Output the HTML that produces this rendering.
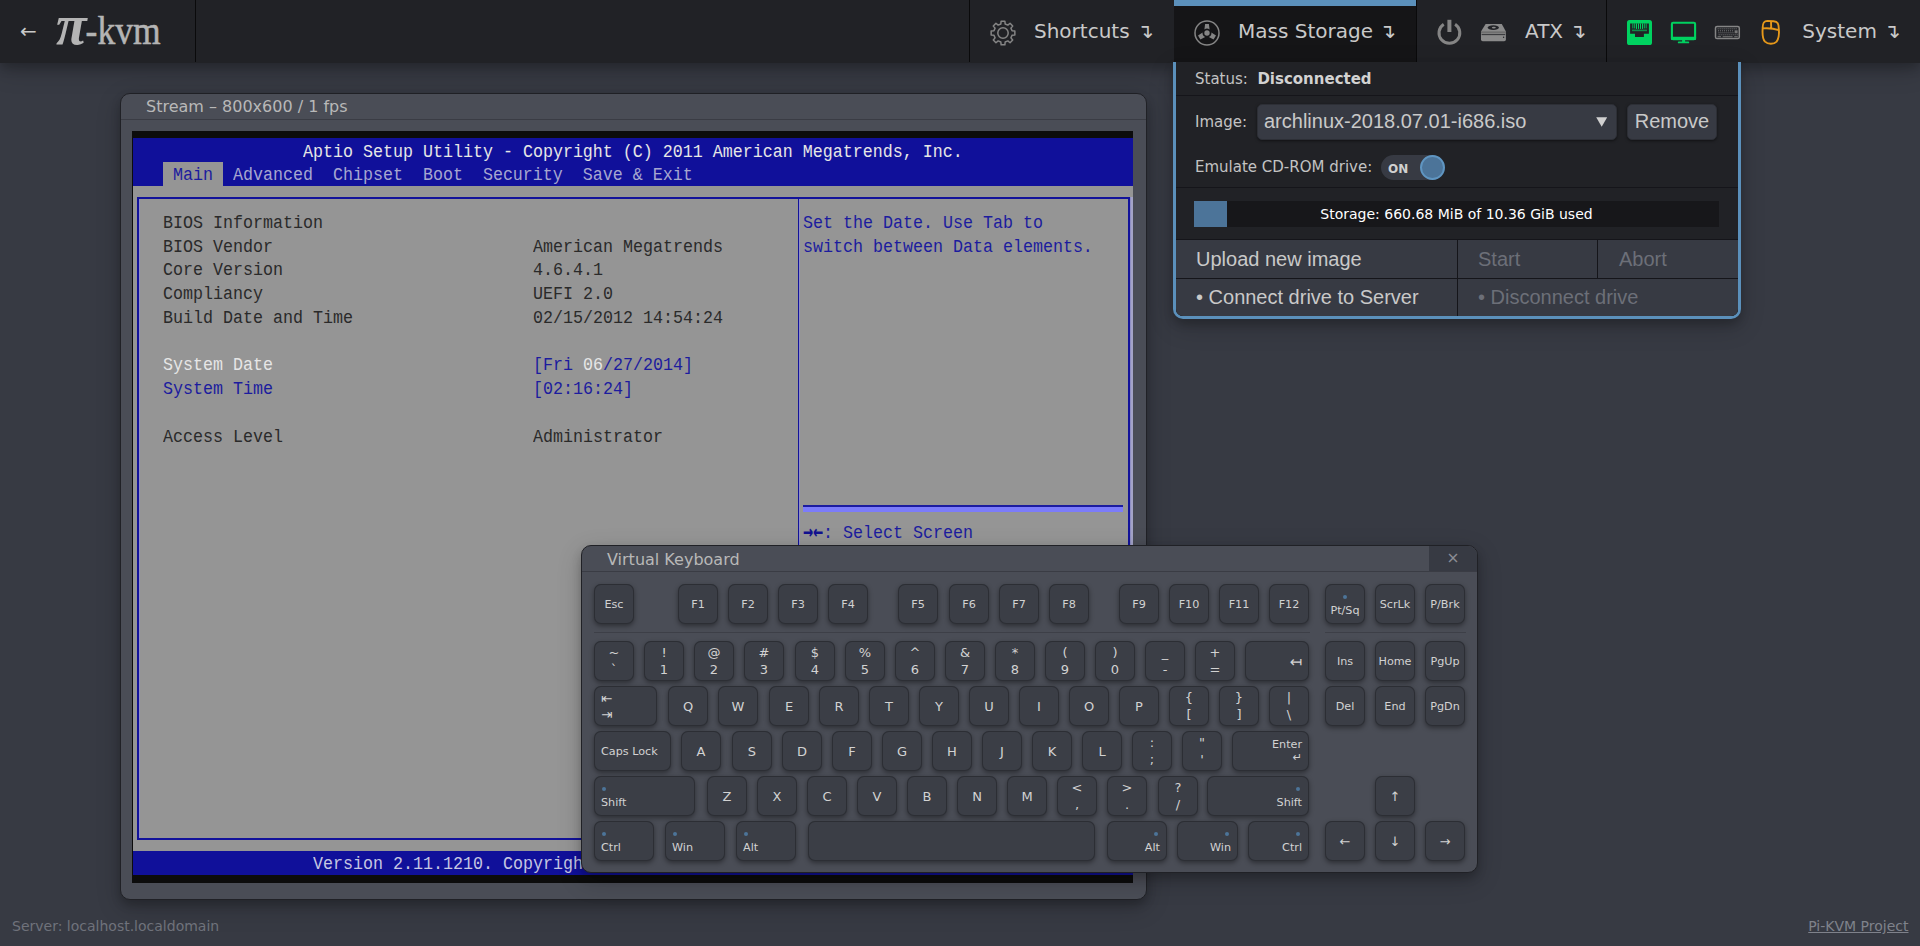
<!DOCTYPE html>
<html lang="en">
<head>
<meta charset="utf-8">
<title>Pi-KVM Session</title>
<style>
html,body{margin:0;padding:0;}
body{width:1920px;height:946px;overflow:hidden;background:#373a43;color:#c3c3c3;font-family:"DejaVu Sans","Liberation Sans",sans-serif;font-size:16px;position:relative;}
*{box-sizing:border-box;}
.abs{position:absolute;}
/* ---------- navbar ---------- */
#nav{position:absolute;left:0;top:0;width:1920px;height:63px;background:#212226;box-shadow:0 5px 10px 0 rgba(0,0,0,.2),0 7.5px 25px 0 rgba(0,0,0,.19);z-index:50;}
#nav .sep{position:absolute;top:0;width:1px;height:62px;background:#0a0a0b;}
#nav .txt{position:absolute;top:0;height:62px;line-height:62px;font-size:20px;color:#c9c9c9;white-space:nowrap;}
#nav .active{position:absolute;left:1174px;top:0;width:242px;height:62px;background:#151517;border-top:6px solid #5b90bb;}
#logo{position:absolute;left:56px;top:-6px;height:62px;line-height:62px;white-space:nowrap;color:#b4b4b4;font-family:"Liberation Serif","DejaVu Serif",serif;}
/* ---------- dropdown ---------- */
#drop{position:absolute;left:1173px;top:62px;width:568px;height:257px;background:#212226;border:3px solid #5b90bb;border-top:none;border-radius:0 0 10px 10px;box-shadow:0 5px 10px 0 rgba(0,0,0,.2),0 7.5px 25px 0 rgba(0,0,0,.19);z-index:60;overflow:hidden;}
#drop .hr{position:absolute;left:0;width:100%;height:1px;background:#15151a;}
#drop .lbl{position:absolute;font-size:15px;white-space:nowrap;color:#c3c3c3;}
.btnrow{position:absolute;background:#373a43;font-family:"Liberation Sans",sans-serif;font-size:20px;white-space:nowrap;color:#c9c9c9;}
.btnrow.dis{color:#6c6f78;}
/* ---------- windows ---------- */
.win{position:absolute;background:#4a4d56;border:1px solid #202126;border-radius:10px;box-shadow:0 5px 10px 0 rgba(0,0,0,.2),0 7.5px 25px 0 rgba(0,0,0,.19);}
.win .title{position:absolute;left:0;top:0;right:0;height:26px;border-bottom:1px solid #3a3c44;font-size:16px;line-height:24px;color:#b8b8b8;white-space:nowrap;}
/* ---------- bios ---------- */
#scr{position:absolute;left:11px;top:37px;width:1001px;height:752px;background:#0c0c0c;overflow:hidden;}
#scr .t{position:absolute;white-space:pre;font-family:"Liberation Mono","DejaVu Sans Mono",monospace;font-size:16.67px;line-height:24px;height:24px;transform:scaleY(1.13);transform-origin:0 16.44px;}
.k{color:#2a2a2a}.b{color:#1c1c9e}.w{color:#e6e6e6}
/* ---------- keyboard ---------- */
.key{position:absolute;height:40px;background:#3b3e46;border-radius:7px;box-shadow:inset 0 0 0 1px #2c2e34,0 2px 5px rgba(0,0,0,.4);color:#d2d2d2;font-size:11.2px;white-space:nowrap;}
.key span{position:absolute;display:block;}
.key .c{left:0;right:0;top:1px;height:40px;text-align:center;line-height:39px;}
.key .b1{font-size:13px;top:0.5px;}
.key .b2{font-size:15px;}
.key .u{left:0;right:0;top:4px;text-align:center;line-height:16.6px;height:16.6px;font-size:13px;}
.key .d{left:0;right:0;top:20.6px;text-align:center;line-height:16.6px;height:16.6px;font-size:13px;}
.key .bl{left:7px;top:20.3px;line-height:13px;}
.key .br{right:7px;top:20.3px;line-height:13px;}
.key .ml{left:7px;top:1px;line-height:39px;}
.key .mr{right:7px;top:1.5px;line-height:39px;}
.key .ta{left:7px;line-height:16px;font-size:13.5px;}
.key .en{right:7px;top:7px;line-height:13px;}
.key .en2{right:7px;top:20px;line-height:13px;}
.key .pt{left:0;right:0;top:20px;text-align:center;line-height:13px;}
.key .dot{position:absolute;width:4px;height:4px;border-radius:50%;background:#4c7499;}
.ksep{position:absolute;height:1px;background:#3d3f47;}
.ar{display:inline-block;width:20px;font-family:"DejaVu Sans Mono",monospace;font-weight:bold;font-size:16.6px;letter-spacing:0;color:#111190;transform:scaleY(1.25);transform-origin:0 60%;}
.m{color:#a6a6d0}.w2{color:#c6c6e2}
#foot1{position:absolute;left:12px;top:917px;font-size:14px;line-height:18px;color:#6f727b;white-space:nowrap;}
#foot2{position:absolute;right:11.5px;top:917px;font-size:14px;line-height:18px;color:#7f828b;text-decoration:underline;white-space:nowrap;}
</style>
</head>
<body>

<div id="nav">
  <div class="txt" style="left:20px;font-size:20px;color:#c9c9c9;">←</div>
  <div id="logo"><span style="font-size:56px;font-style:italic;font-weight:bold;">π</span><span style="display:inline-block;font-size:35.5px;-webkit-text-stroke:0.5px #b4b4b4;margin-left:-1px;transform:scaleY(1.13);transform-origin:0 70%;">-kvm</span></div>
  <div class="sep" style="left:195px"></div>
  <div class="sep" style="left:969px"></div>
  <div class="active"></div>
  <div class="sep" style="left:1416px"></div>
  <div class="sep" style="left:1606px"></div>

  <svg class="abs" style="left:988px;top:18px" width="30" height="30" viewBox="-15 -15 30 30"><path d="M-2.17,-9.04 L-1.88,-11.85 L1.88,-11.85 L2.17,-9.04 L4.86,-7.93 L7.05,-9.71 L9.71,-7.05 L7.93,-4.86 L9.04,-2.17 L11.85,-1.88 L11.85,1.88 L9.04,2.17 L7.93,4.86 L9.71,7.05 L7.05,9.71 L4.86,7.93 L2.17,9.04 L1.88,11.85 L-1.88,11.85 L-2.17,9.04 L-4.86,7.93 L-7.05,9.71 L-9.71,7.05 L-7.93,4.86 L-9.04,2.17 L-11.85,1.88 L-11.85,-1.88 L-9.04,-2.17 L-7.93,-4.86 L-9.71,-7.05 L-7.05,-9.71 L-4.86,-7.93Z" fill="none" stroke="#858585" stroke-width="1.5" stroke-linejoin="round"/><circle r="5.2" fill="none" stroke="#858585" stroke-width="1.5"/></svg>
  <div class="txt" style="left:1034px">Shortcuts</div>
  <div class="txt" style="left:1137px">↴</div>

  <svg class="abs" style="left:1191.5px;top:17.5px" width="30" height="30" viewBox="-15 -15 30 30"><circle r="12" fill="none" stroke="#858585" stroke-width="1.5"/>
    <g fill="#858585"><circle r="2.7"/>
    <path id="bl" d="M-2.6,-3.6 L-1.9,-9 L1.9,-9 L2.6,-3.6 A4.4,4.4 0 0 0 -2.6,-3.6Z"/>
    <path d="M-2.6,-3.6 L-2.4,-9 L2.4,-9 L2.6,-3.6 A4.4,4.4 0 0 0 -2.6,-3.6Z" transform="rotate(120)"/>
    <path d="M-2.6,-3.6 L-2.4,-9 L2.4,-9 L2.6,-3.6 A4.4,4.4 0 0 0 -2.6,-3.6Z" transform="rotate(240)"/></g></svg>
  <div class="txt" style="left:1238px">Mass Storage</div>
  <div class="txt" style="left:1379.3px">↴</div>

  <svg class="abs" style="left:1434px;top:17px" width="30" height="30" viewBox="0 0 30 30"><path d="M9.7,7.2 A10.4,10.4 0 1 0 21.1,7.2" fill="none" stroke="#858585" stroke-width="3"/><rect x="13.4" y="2.8" width="4" height="12.2" fill="#858585"/></svg>
  <svg class="abs" style="left:1479px;top:22px" width="30" height="22" viewBox="0 0 30 22"><path d="M6.6,2 L22.8,2 L26.9,9.4 L26.9,17.6 Q26.9,19.3 25.2,19.3 L3.7,19.3 Q2,19.3 2,17.6 L2,9.4Z" fill="#8a8a8a"/><rect x="2" y="9.4" width="24.9" height="2" fill="#6e6e6e"/><rect x="2.6" y="12.2" width="23.6" height="0.9" fill="#2a2b2f"/><ellipse cx="14.3" cy="5.6" rx="5.6" ry="2.4" fill="#212226"/><ellipse cx="14.8" cy="5.6" rx="2" ry="0.9" fill="#8a8a8a"/><circle cx="24.6" cy="15.3" r="0.7" fill="#212226"/></svg>
  <div class="txt" style="left:1525px">ATX</div>
  <div class="txt" style="left:1569.5px">↴</div>

  <svg class="abs" style="left:1627px;top:20px" width="25" height="25" viewBox="0 0 25 25"><rect width="25" height="25" rx="2.6" fill="#00d260"/><path d="M3.1,3.4 H21.9 V13.8 H16.9 V16.9 H8 V13.8 H3.1Z" fill="#212226"/>
   <g fill="#00d260"><rect x="5.0" y="3.4" width="1.5" height="5" opacity=".55"/><rect x="7.0" y="3.4" width="1.2" height="5" opacity=".7"/><rect x="9.0" y="3.4" width="1.0" height="5.5"/><rect x="11.0" y="3.4" width="1.0" height="5.5"/><rect x="13.0" y="3.4" width="1.0" height="5.5"/><rect x="15.0" y="3.4" width="1.0" height="5.5"/><rect x="16.8" y="3.4" width="1.2" height="5" opacity=".7"/><rect x="18.5" y="3.4" width="1.5" height="5" opacity=".55"/>
   <rect x="5.0" y="9.6" width="15" height="1.6" opacity=".6"/></g></svg>
  <svg class="abs" style="left:1669px;top:20px" width="30" height="26" viewBox="0 0 30 26"><rect x="2.9" y="2.7" width="23.2" height="16.4" rx="1.2" fill="none" stroke="#00d260" stroke-width="2.1"/><rect x="1.9" y="16.7" width="25.2" height="3.4" rx="1" fill="#00d260"/><rect x="13.1" y="19.5" width="3" height="2.6" fill="#00d260"/><rect x="8.8" y="21.5" width="11.4" height="1.8" rx=".9" fill="#00d260"/></svg>
  <svg class="abs" style="left:1713px;top:24px" width="30" height="18" viewBox="0 0 30 18"><rect x="2.5" y="2.5" width="23.8" height="12" rx="1.6" fill="none" stroke="#858585" stroke-width="1.5"/>
   <g stroke="#858585" stroke-width="1" stroke-dasharray="1.1 0.9" opacity=".85"><path d="M4.6,4.8H24.6M5,6.8H20.6M5.4,8.8H20.6M5.6,10.8H24.8"/></g><g fill="#858585" opacity=".85"><rect x="4.6" y="12.2" width="3.4" height="1"/><rect x="9.6" y="12.2" width="10" height="1"/><rect x="21.2" y="12.2" width="3.6" height="1"/><rect x="21.6" y="6.3" width="3" height="3"/></g></svg>
  <svg class="abs" style="left:1758px;top:18px" width="26" height="30" viewBox="0 0 26 30"><path d="M4.7,10 C4.6,5.2 5.6,3.1 9.4,2.9 L15.6,3.2 C19.8,3.6 20.7,5.6 20.8,10.8 C21.4,17 21.2,20.5 18.6,23.6 C16,26.4 10,26.6 7,23.6 C4.2,20.6 4.3,15 4.7,10Z M4.8,10.4 C10,10 16,10.5 20.8,12.1 M13,3 L13.2,10.3" fill="none" stroke="#e6981a" stroke-width="1.9" stroke-linejoin="round"/></svg>
  <div class="txt" style="left:1802.3px">System</div>
  <div class="txt" style="left:1883.7px">↴</div>
</div>
<!--STREAM-->
<div class="win" style="left:120px;top:93px;width:1027px;height:807px;">
<div class="title"><span class="abs" style="left:25px;top:1px;">Stream – 800x600 / 1 fps</span></div>
<div id="scr">
<div class="abs" style="left:1px;top:7px;width:1000.5px;height:736.5px;background:#10109a;"></div>
<div class="abs" style="left:1px;top:54.5px;width:1000.5px;height:665px;background:#959595;"></div>
<div class="abs" style="left:31px;top:31px;width:60px;height:24px;background:#959595;"></div>
<div class="abs" style="left:5.2px;top:66px;width:993.3px;height:1.8px;background:#12129a;"></div>
<div class="abs" style="left:5.2px;top:706.7px;width:993.3px;height:2px;background:#12129a;"></div>
<div class="abs" style="left:5.2px;top:66px;width:1.8px;height:642.7px;background:#12129a;"></div>
<div class="abs" style="left:7px;top:67.8px;width:1px;height:638.9px;background:#8f8fc4;"></div>
<div class="abs" style="left:996px;top:66px;width:1.8px;height:642.7px;background:#12129a;"></div>
<div class="abs" style="left:997.8px;top:66px;width:0.8px;height:642.7px;background:#8f8fc4;"></div>
<div class="abs" style="left:665.6px;top:66px;width:1.8px;height:642.7px;background:#12129a;"></div>
<div class="abs" style="left:667.4px;top:67.8px;width:0.9px;height:638.9px;background:#8f8fc4;"></div>
<div class="abs" style="left:998.6px;top:66px;width:2.4px;height:642.7px;background:#a3a3c6;"></div>
<div class="abs" style="left:671px;top:374.3px;width:320.3px;height:6.7px;background:#7c7cfa;"></div>
<div class="abs" style="left:671px;top:374.3px;width:320.3px;height:1.9px;background:#1c1ca0;"></div>
<div class="t w" style="left:171px;top:9.50px;">Aptio Setup Utility - Copyright (C) 2011 American Megatrends, Inc.</div>
<div class="t b" style="left:41px;top:33.25px;">Main</div>
<div class="t m" style="left:101px;top:33.25px;">Advanced  Chipset  Boot  Security  Save &amp; Exit</div>
<div class="t k" style="left:31px;top:80.75px;">BIOS Information</div>
<div class="t k" style="left:31px;top:104.50px;">BIOS Vendor</div>
<div class="t k" style="left:401px;top:104.50px;">American Megatrends</div>
<div class="t k" style="left:31px;top:128.25px;">Core Version</div>
<div class="t k" style="left:401px;top:128.25px;">4.6.4.1</div>
<div class="t k" style="left:31px;top:152.00px;">Compliancy</div>
<div class="t k" style="left:401px;top:152.00px;">UEFI 2.0</div>
<div class="t k" style="left:31px;top:175.75px;">Build Date and Time</div>
<div class="t k" style="left:401px;top:175.75px;">02/15/2012 14:54:24</div>
<div class="t w" style="left:31px;top:223.25px;">System Date</div>
<div class="t b" style="left:401px;top:223.25px;">[Fri <span class="w">06</span>/27/2014]</div>
<div class="t b" style="left:31px;top:247.00px;">System Time</div>
<div class="t b" style="left:401px;top:247.00px;">[02:16:24]</div>
<div class="t k" style="left:31px;top:294.50px;">Access Level</div>
<div class="t k" style="left:401px;top:294.50px;">Administrator</div>
<div class="t b" style="left:671px;top:80.75px;">Set the Date. Use Tab to</div>
<div class="t b" style="left:671px;top:104.50px;">switch between Data elements.</div>
<div class="t b" style="left:671px;top:389.50px;"><span class="ar">→←</span>: Select Screen</div>
<div class="t w2" style="left:181px;top:722.00px;width:272px;overflow:hidden;">Version 2.11.1210. Copyright (C) 2011 American Megatrends, Inc.</div>
</div>
</div>
<!--/STREAM-->
<!--KBD-->
<div class="win" style="left:581px;top:545px;width:897px;height:328px;z-index:30;">
<div class="title"><span class="abs" style="left:25px;top:2px;">Virtual Keyboard</span><span class="abs" style="left:847px;top:0;width:48px;height:25px;background:#373a43;border-radius:0 9px 0 0;text-align:center;line-height:25px;font-size:15.5px;color:#8b8d95;">×</span></div>
<div class="ksep" style="left:12px;top:86px;width:716px;"></div>
<div class="ksep" style="left:743px;top:86px;width:141px;"></div>
<div class="key" style="left:12px;top:38px;width:40px;"><span class="c">Esc</span></div>
<div class="key" style="left:96px;top:38px;width:40px;"><span class="c">F1</span></div>
<div class="key" style="left:146px;top:38px;width:40px;"><span class="c">F2</span></div>
<div class="key" style="left:196px;top:38px;width:40px;"><span class="c">F3</span></div>
<div class="key" style="left:246px;top:38px;width:40px;"><span class="c">F4</span></div>
<div class="key" style="left:316px;top:38px;width:40px;"><span class="c">F5</span></div>
<div class="key" style="left:367px;top:38px;width:40px;"><span class="c">F6</span></div>
<div class="key" style="left:417px;top:38px;width:40px;"><span class="c">F7</span></div>
<div class="key" style="left:467px;top:38px;width:40px;"><span class="c">F8</span></div>
<div class="key" style="left:537px;top:38px;width:40px;"><span class="c">F9</span></div>
<div class="key" style="left:587px;top:38px;width:40px;"><span class="c">F10</span></div>
<div class="key" style="left:637px;top:38px;width:40px;"><span class="c">F11</span></div>
<div class="key" style="left:687px;top:38px;width:40px;"><span class="c">F12</span></div>
<div class="key" style="left:743px;top:38px;width:40px;"><i class="dot" style="left:18px;top:11px"></i><span class="pt">Pt/Sq</span></div>
<div class="key" style="left:793px;top:38px;width:40px;"><span class="c">ScrLk</span></div>
<div class="key" style="left:843px;top:38px;width:40px;"><span class="c">P/Brk</span></div>
<div class="key" style="left:12px;top:95px;width:40px;"><span class="u">~</span><span class="d">`</span></div>
<div class="key" style="left:62px;top:95px;width:40px;"><span class="u">!</span><span class="d">1</span></div>
<div class="key" style="left:112px;top:95px;width:40px;"><span class="u">@</span><span class="d">2</span></div>
<div class="key" style="left:162px;top:95px;width:40px;"><span class="u">#</span><span class="d">3</span></div>
<div class="key" style="left:213px;top:95px;width:40px;"><span class="u">$</span><span class="d">4</span></div>
<div class="key" style="left:263px;top:95px;width:40px;"><span class="u">%</span><span class="d">5</span></div>
<div class="key" style="left:313px;top:95px;width:40px;"><span class="u">^</span><span class="d">6</span></div>
<div class="key" style="left:363px;top:95px;width:40px;"><span class="u">&amp;</span><span class="d">7</span></div>
<div class="key" style="left:413px;top:95px;width:40px;"><span class="u">*</span><span class="d">8</span></div>
<div class="key" style="left:463px;top:95px;width:40px;"><span class="u">(</span><span class="d">9</span></div>
<div class="key" style="left:513px;top:95px;width:40px;"><span class="u">)</span><span class="d">0</span></div>
<div class="key" style="left:563px;top:95px;width:40px;"><span class="u">_</span><span class="d">-</span></div>
<div class="key" style="left:613px;top:95px;width:40px;"><span class="u">+</span><span class="d">=</span></div>
<div class="key" style="left:663px;top:95px;width:64px;"><span class="mr b2">↤</span></div>
<div class="key" style="left:743px;top:95px;width:40px;"><span class="c">Ins</span></div>
<div class="key" style="left:793px;top:95px;width:40px;"><span class="c">Home</span></div>
<div class="key" style="left:843px;top:95px;width:40px;"><span class="c">PgUp</span></div>
<div class="key" style="left:12px;top:140px;width:63px;"><span class="ta" style="top:3.5px">⇤</span><span class="ta" style="top:19.5px">⇥</span></div>
<div class="key" style="left:86px;top:140px;width:40px;"><span class="c b1">Q</span></div>
<div class="key" style="left:136px;top:140px;width:40px;"><span class="c b1">W</span></div>
<div class="key" style="left:187px;top:140px;width:40px;"><span class="c b1">E</span></div>
<div class="key" style="left:237px;top:140px;width:40px;"><span class="c b1">R</span></div>
<div class="key" style="left:287px;top:140px;width:40px;"><span class="c b1">T</span></div>
<div class="key" style="left:337px;top:140px;width:40px;"><span class="c b1">Y</span></div>
<div class="key" style="left:387px;top:140px;width:40px;"><span class="c b1">U</span></div>
<div class="key" style="left:437px;top:140px;width:40px;"><span class="c b1">I</span></div>
<div class="key" style="left:487px;top:140px;width:40px;"><span class="c b1">O</span></div>
<div class="key" style="left:537px;top:140px;width:40px;"><span class="c b1">P</span></div>
<div class="key" style="left:587px;top:140px;width:40px;"><span class="u">{</span><span class="d">[</span></div>
<div class="key" style="left:637px;top:140px;width:40px;"><span class="u">}</span><span class="d">]</span></div>
<div class="key" style="left:687px;top:140px;width:40px;"><span class="u">|</span><span class="d">\</span></div>
<div class="key" style="left:743px;top:140px;width:40px;"><span class="c">Del</span></div>
<div class="key" style="left:793px;top:140px;width:40px;"><span class="c">End</span></div>
<div class="key" style="left:843px;top:140px;width:40px;"><span class="c">PgDn</span></div>
<div class="key" style="left:12px;top:185px;width:77px;"><span class="ml">Caps Lock</span></div>
<div class="key" style="left:99px;top:185px;width:40px;"><span class="c b1">A</span></div>
<div class="key" style="left:150px;top:185px;width:40px;"><span class="c b1">S</span></div>
<div class="key" style="left:200px;top:185px;width:40px;"><span class="c b1">D</span></div>
<div class="key" style="left:250px;top:185px;width:40px;"><span class="c b1">F</span></div>
<div class="key" style="left:300px;top:185px;width:40px;"><span class="c b1">G</span></div>
<div class="key" style="left:350px;top:185px;width:40px;"><span class="c b1">H</span></div>
<div class="key" style="left:400px;top:185px;width:40px;"><span class="c b1">J</span></div>
<div class="key" style="left:450px;top:185px;width:40px;"><span class="c b1">K</span></div>
<div class="key" style="left:500px;top:185px;width:40px;"><span class="c b1">L</span></div>
<div class="key" style="left:550px;top:185px;width:40px;"><span class="u">:</span><span class="d">;</span></div>
<div class="key" style="left:600px;top:185px;width:40px;"><span class="u">"</span><span class="d">'</span></div>
<div class="key" style="left:650px;top:185px;width:77px;"><span class="en">Enter</span><span class="en2">↵</span></div>
<div class="key" style="left:12px;top:230px;width:101px;"><span class="bl">Shift</span><i class="dot" style="left:8px;top:11px"></i></div>
<div class="key" style="left:125px;top:230px;width:40px;"><span class="c b1">Z</span></div>
<div class="key" style="left:175px;top:230px;width:40px;"><span class="c b1">X</span></div>
<div class="key" style="left:225px;top:230px;width:40px;"><span class="c b1">C</span></div>
<div class="key" style="left:275px;top:230px;width:40px;"><span class="c b1">V</span></div>
<div class="key" style="left:325px;top:230px;width:40px;"><span class="c b1">B</span></div>
<div class="key" style="left:375px;top:230px;width:40px;"><span class="c b1">N</span></div>
<div class="key" style="left:425px;top:230px;width:40px;"><span class="c b1">M</span></div>
<div class="key" style="left:475px;top:230px;width:40px;"><span class="u">&lt;</span><span class="d">,</span></div>
<div class="key" style="left:525px;top:230px;width:40px;"><span class="u">&gt;</span><span class="d">.</span></div>
<div class="key" style="left:576px;top:230px;width:40px;"><span class="u">?</span><span class="d">/</span></div>
<div class="key" style="left:625px;top:230px;width:102px;"><span class="br">Shift</span><i class="dot" style="right:9px;top:11px"></i></div>
<div class="key" style="left:793px;top:230px;width:40px;"><span class="c b1">↑</span></div>
<div class="key" style="left:12px;top:275px;width:60px;"><span class="bl">Ctrl</span><i class="dot" style="left:8px;top:11px"></i></div>
<div class="key" style="left:83px;top:275px;width:60px;"><span class="bl">Win</span><i class="dot" style="left:8px;top:11px"></i></div>
<div class="key" style="left:154px;top:275px;width:60px;"><span class="bl">Alt</span><i class="dot" style="left:8px;top:11px"></i></div>
<div class="key" style="left:226px;top:275px;width:287px;"></div>
<div class="key" style="left:525px;top:275px;width:60px;"><span class="br">Alt</span><i class="dot" style="right:9px;top:11px"></i></div>
<div class="key" style="left:595px;top:275px;width:61px;"><span class="br">Win</span><i class="dot" style="right:9px;top:11px"></i></div>
<div class="key" style="left:666px;top:275px;width:61px;"><span class="br">Ctrl</span><i class="dot" style="right:9px;top:11px"></i></div>
<div class="key" style="left:743px;top:275px;width:40px;"><span class="c b1">←</span></div>
<div class="key" style="left:793px;top:275px;width:40px;"><span class="c b1">↓</span></div>
<div class="key" style="left:843px;top:275px;width:40px;"><span class="c b1">→</span></div>
</div>
<!--/KBD-->
<div id="drop">
  <div class="lbl" style="left:19px;top:7.5px;line-height:18px;">Status:&nbsp; <b style="color:#d2d2d2">Disconnected</b></div>
  <div class="hr" style="top:33px"></div>
  <div class="lbl" style="left:19px;top:50.5px;line-height:18px;">Image:</div>
  <div class="abs" style="left:81px;top:42px;width:360px;height:36px;background:#373a43;border:1px solid #2d2f36;border-radius:5px;box-shadow:0 1px 3px rgba(0,0,0,.5);font-family:'Liberation Sans',sans-serif;font-size:20px;line-height:33px;color:#c9c9c9;padding-left:6px;white-space:nowrap;">archlinux-2018.07.01-i686.iso
    <svg class="abs" style="left:337px;top:11px" width="14" height="12" viewBox="0 0 14 12"><path d="M1.2,1.2 L12.2,1.2 L6.7,10.8Z" fill="#d0d0d0"/></svg>
  </div>
  <div class="abs" style="left:451px;top:42px;width:90px;height:36px;background:#373a43;border:1px solid #2d2f36;border-radius:5px;box-shadow:0 1px 3px rgba(0,0,0,.5);font-family:'Liberation Sans',sans-serif;font-size:20px;line-height:33px;color:#c9c9c9;text-align:center;">Remove</div>
  <div class="lbl" style="left:19px;top:95.5px;line-height:18px;">Emulate CD-ROM drive:</div>
  <div class="abs" style="left:205px;top:93px;width:63px;height:25px;border-radius:13px;background:#373a43;">
     <span class="abs" style="left:7px;top:0;line-height:28px;font-size:12px;font-weight:bold;color:#d0d0d0;">ON</span>
     <span class="abs" style="left:39px;top:0;width:24.5px;height:25px;border-radius:50%;background:#4c7499;border:2px solid #5f95c1;"></span>
  </div>
  <div class="hr" style="top:125px"></div>
  <div class="abs" style="left:18px;top:139px;width:525px;height:26px;background:#17171a;">
     <div class="abs" style="left:0;top:0;width:33px;height:26px;background:#4c7499;"></div>
     <div class="abs" style="left:0;top:0;width:525px;height:26px;line-height:26px;text-align:center;font-size:14px;color:#ffffff;white-space:nowrap;">Storage: 660.68 MiB of 10.36 GiB used</div>
  </div>
  <div class="abs" style="left:0;top:177px;width:562px;height:80px;background:#15151a;"></div>
  <div class="btnrow" style="left:0;top:178px;width:281px;height:38px;line-height:38px;padding-left:20px;">Upload new image</div>
  <div class="btnrow dis" style="left:282px;top:178px;width:139px;height:38px;line-height:38px;padding-left:20px;">Start</div>
  <div class="btnrow dis" style="left:422px;top:178px;width:140px;height:38px;line-height:38px;padding-left:21px;">Abort</div>
  <div class="btnrow" style="left:0;top:217px;width:281px;height:38px;line-height:37px;padding-left:20px;">• Connect drive to Server</div>
  <div class="btnrow dis" style="left:282px;top:217px;width:280px;height:38px;line-height:37px;padding-left:20px;">• Disconnect drive</div>
</div>
<div id="foot1">Server: localhost.localdomain</div>
<div id="foot2">Pi-KVM Project</div>
</body>
</html>
